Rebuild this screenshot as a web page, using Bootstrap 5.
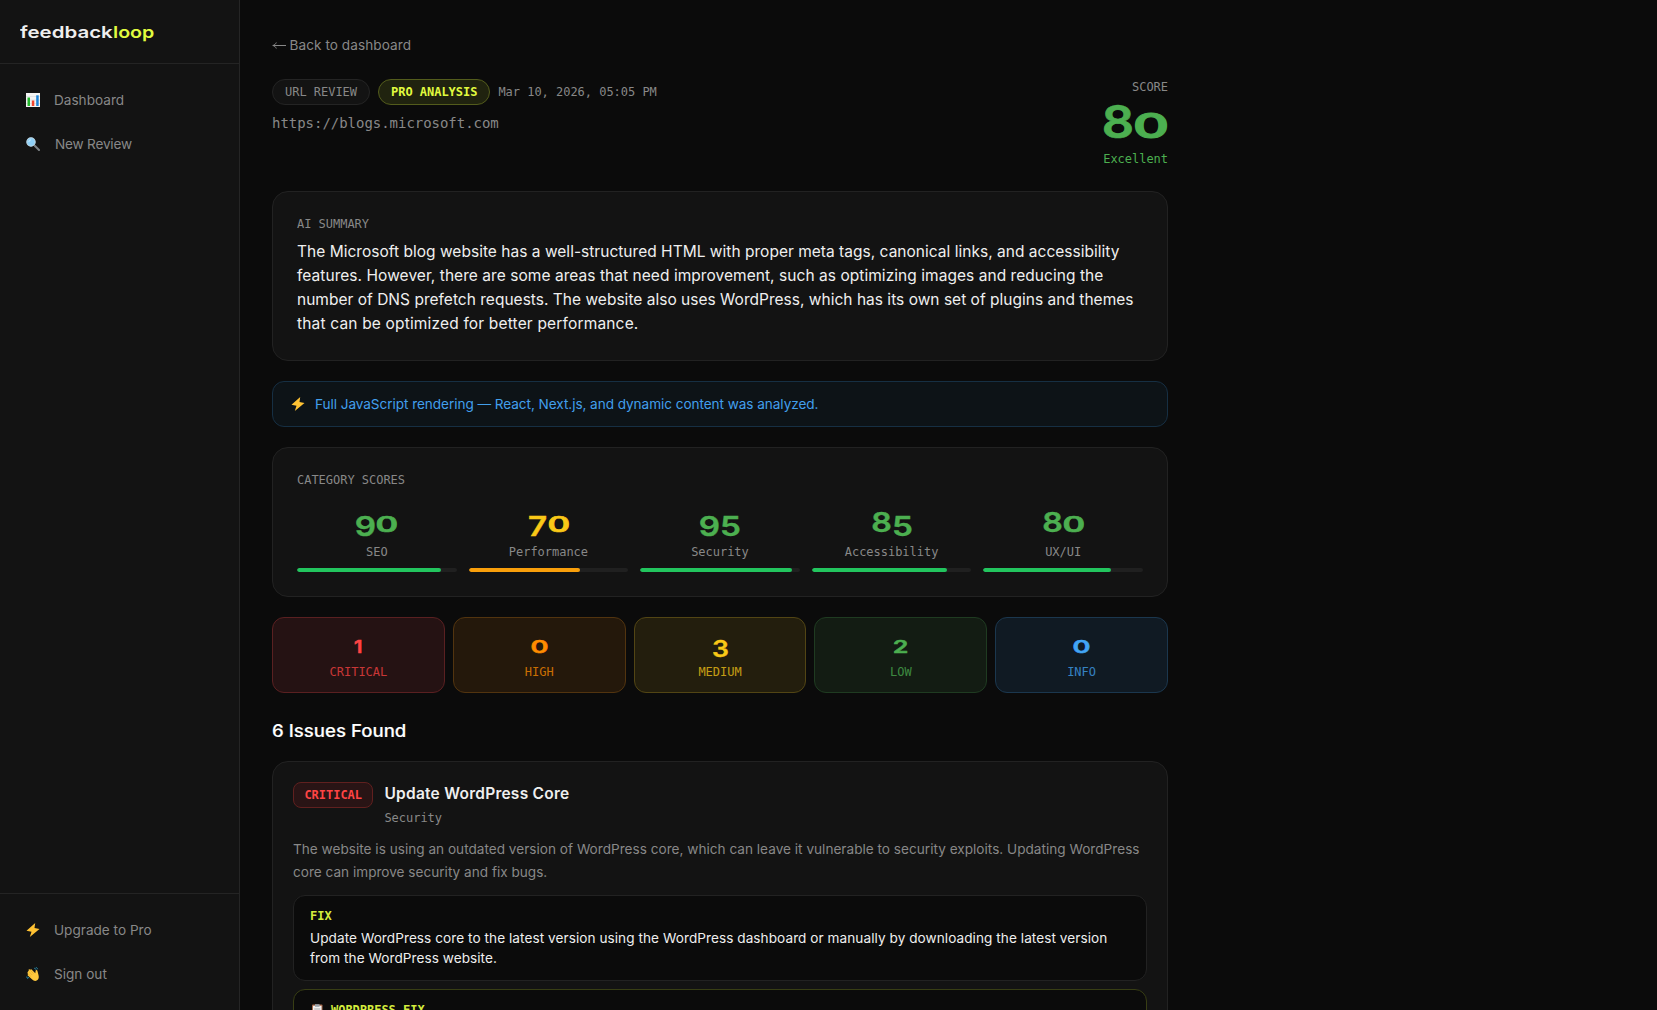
<!DOCTYPE html>
<html lang="en" data-bs-theme="dark">
<head>
<meta charset="utf-8">
<meta name="viewport" content="width=device-width, initial-scale=1">
<title>feedbackloop</title>
<link href="https://cdn.jsdelivr.net/npm/bootstrap@5.3.0/dist/css/bootstrap.min.css" rel="stylesheet">
<style>
:root{--bg:#0b0b0b;--panel:#131313;--line:#222;--muted:#888;--lime:#e1fb3f;--green:#4caf50;--yellow:#f9c817;--red:#ff4444;--orange:#ff8c00;--blue:#42a5f5}
body{background:var(--bg);color:#efefef;font-family:Inter,"Noto Sans",sans-serif;font-size:13.6px;line-height:20px;height:100vh;overflow:hidden}
.mono{font-family:"DejaVu Sans Mono","Liberation Mono",monospace;font-size:12px;line-height:16px;letter-spacing:-.025px}
.muted{color:var(--muted)}
.sidebar{width:240px;background:var(--panel);border-right:1px solid #252525}
.brand{height:64px;padding:1px 20px 0;border-bottom:1px solid #242424;font-size:16.5px;font-weight:600;line-height:63px}
.brand span{display:inline-block;transform-origin:0 50%}
.brand .first{width:92.8px;transform:scaleX(1.24)}
.brand .second{color:var(--lime);transform:scaleX(1.19)}
.side-group{padding:16px 12px}
.side-item{height:40px;padding:0 14px;color:var(--muted);text-decoration:none;gap:14px}
.side-item svg{width:14px;height:14px;flex:none}
.side-foot{border-top:1px solid #242424}
.page-main{width:960px;padding:35px 32px 0;height:100vh;overflow:hidden}
.back{color:var(--muted);text-decoration:none;gap:3.5px;height:20px;letter-spacing:.06px}
.pill{border:1px solid #242424;border-radius:13px;padding:4px 12px;background:#131313}
.pill-pro{border-color:#535c1c;background:#20230f;color:var(--lime);font-weight:700}
.url{font-size:14px;line-height:20px;margin-top:8px;letter-spacing:-.03px}
.panel{background:var(--panel);border:1px solid var(--line);border-radius:16px}
.num{font-weight:600;white-space:nowrap;color:var(--c)}
.num span{display:inline-block;line-height:1;text-align:center}
.d0,.d1,.d2{font-size:.72em;width:.98em;-webkit-text-stroke:.03em}
.d0{transform:scaleX(1.58)}
.d1{transform:scaleX(1.15);width:.6em}
.d2{transform:scaleX(1.45)}
.d8,.d3,.d5,.d7,.d9{font-size:.94em;width:.745em;-webkit-text-stroke:.015em}
.d8{transform:scaleX(1.12)}
.d3,.d5,.d7,.d9{transform:translateY(.16em) scaleX(1.18)}
.num-xl{font-size:48px;line-height:48px;margin:2px 0 6px}
.num-lg{font-size:29px;line-height:36px}
.num-lg .d0{width:1.04em;transform:scaleX(1.64)}
.num-lg .d8,.num-lg .d9,.num-lg .d5,.num-lg .d7{width:.77em}
.num-lg .d8{transform:scaleX(1.18)}
.num-lg .d9,.num-lg .d5,.num-lg .d7{transform:translateY(.16em) scaleX(1.22)}
.num-md{font-size:24px;line-height:32px}
.summary{font-size:15.5px;line-height:24px}
.ln{display:block;white-space:nowrap}
.notice{height:46px;border:1px solid #162f43;border-radius:12px;background:#0d1317;color:#429fec;padding:0 18px;gap:10px}
.notice svg,.fix-icon{width:14px;height:14px;flex:none}
.cat-row{gap:12px}
.track{height:4px;border-radius:2px;background:#202020;margin-top:8px;overflow:hidden}
.track div{height:4px;border-radius:2px;background:#22c55e}
.track .warn{background:#f99f0b}
.sev{border:1px solid;border-radius:12px;height:76px;padding-top:11px}
.sev .mono{margin-top:3px;opacity:.75;color:var(--c)}
.s-red{--c:var(--red);background:#251213;border-color:#5a2021}
.s-orange{--c:var(--orange);background:#24180b;border-color:#52340f}
.s-yellow{--c:var(--yellow);background:#231e0d;border-color:#524514}
.s-green{--c:var(--green);background:#131c13;border-color:#1f3b21}
.s-blue{--c:var(--blue);background:#101a23;border-color:#1b374e}
.issues-title{font-size:17px;font-weight:500;line-height:28px;transform:scaleX(1.095);transform-origin:0 50%;margin:24px 0 16px;-webkit-text-stroke:.15px}
.issue{padding:20px;height:300px}
.tag{border:1px solid #60201f;border-radius:8px;background:#291415;color:var(--red);font-weight:700;padding:4px 10.4px}
.issue-title{font-size:15.5px;font-weight:600;line-height:24px;letter-spacing:.25px}
.desc{line-height:23px;margin:12.5px 0 11px}
.fix{background:#0b0b0b;border:1px solid var(--line);border-radius:12px;padding:12px 16px;height:86px}
.fix .mono{color:#d4ec3d;font-weight:700}
.fix-wp{border-color:#383e14}
.gap-x{gap:8px}
</style>
</head>
<body>
<div class="d-flex vh-100">
  <aside class="sidebar d-flex flex-column flex-shrink-0">
    <div class="brand"><span class="first">feedback</span><span class="second">loop</span></div>
    <nav class="side-group d-flex flex-column gap-1 flex-grow-1">
      <a href="#" class="side-item d-flex align-items-center">
        <svg viewBox="0 0 14 14"><path fill="#f4f4f4" d="M0 0h14v14H0z"/><path stroke="#cfd5da" stroke-width=".5" d="M0 3.5h14M0 7h14M0 10.5h14"/><path fill="#22b62c" d="M1.5 4.5H4V13H1.5z"/><path fill="#f2452e" d="M5.8 7.5h2.5V13H5.8z"/><path fill="#1c83d8" d="M10.2 2.3h2.5V13h-2.5z"/></svg>
        <span>Dashboard</span></a>
      <a href="#" class="side-item d-flex align-items-center">
        <svg viewBox="0 0 14 14"><path stroke="#7d8286" stroke-width="2" stroke-linecap="round" d="m9 9 4 4"/><circle cx="5" cy="5" r="4.2" fill="#8fd0f7" stroke="#c2dcea" stroke-width="1.1"/><path d="M2.8 5A2.4 2.4 0 0 1 5 2.8" fill="none" stroke="#d7f0ff" stroke-width=".8"/></svg>
        <span style="letter-spacing:-.2px;padding-left:1px">New Review</span></a>
    </nav>
    <div class="side-foot side-group d-flex flex-column gap-1">
      <a href="#" class="side-item d-flex align-items-center">
        <svg viewBox="0 0 14 14"><path fill="#ffc233" d="M9.200 0 .5 7.800l5 1L3.800 14 13.500 6 8.500 5.100z"/></svg>
        <span>Upgrade to Pro</span></a>
      <a href="#" class="side-item d-flex align-items-center">
        <svg viewBox="0 0 14 14"><path fill="#ffc83d" d="M2 5.2c-.5-.8.4-1.5 1-.9L2.6 3.2c-.3-.8.7-1.3 1.2-.6l.5.5c-.2-.9.8-1.3 1.3-.6l3.7 3.8.3-2.6c.1-1.1 1.6-1.1 1.8 0l.9 3.6c1 3.5.3 5-1.2 6-1.700 1.1-3.600.5-4.900-.7L1.800 8.500c-.6-.7 0-1.300.700-1.100L1.500 6.300C1 5.600 1.500 5 2 5.200z"/><path fill="none" stroke="#d99a1c" stroke-width=".5" d="m3 4.600 3.300 3.500M4.400 3.300l3.200 3.400M2.500 7.200l2.700 2.500"/><path fill="none" stroke="#2589ab" stroke-width="1" d="M8.200 1.200c1 .1 1.700.7 1.900 1.600M9.800.4c1.100.2 1.700.9 1.800 1.800M.600 9.600c0 1 .6 1.700 1.400 1.900M2 9.800c.1.700.5 1.100 1.100 1.300"/></svg>
        <span>Sign out</span></a>
    </div>
  </aside>

  <main class="page-main flex-shrink-0">
    <a href="#" class="back d-flex align-items-center">
      <svg width="14" height="10" viewBox="0 0 14 10" fill="none" stroke="currentColor"><path d="M.8 5.500H14M4.300 2.500C3.500 4.200 2.300 5.200.8 5.500c1.500.3 2.700 1.300 3.500 3"/></svg><span>Back to dashboard</span></a>

    <header class="d-flex justify-content-between mb-4" style="margin-top:24px">
      <div>
        <div class="d-flex align-items-center gap-x">
          <span class="mono pill muted">URL REVIEW</span>
          <span class="mono pill pill-pro">PRO ANALYSIS</span>
          <span class="mono muted">Mar 10, 2026, 05:05 PM</span>
        </div>
        <div class="mono muted url">https://blogs.microsoft.com</div>
      </div>
      <div class="text-end" style="--c:var(--green)">
        <div class="mono muted">SCORE</div>
        <div class="num num-xl"><span class="d8">8</span><span class="d0">0</span></div>
        <div class="mono" style="color:var(--c)">Excellent</div>
      </div>
    </header>

    <section class="panel p-4" style="height:170px">
      <div class="mono muted mb-2">AI SUMMARY</div>
      <div class="summary">
        <span class="ln" style="letter-spacing:.02px">The Microsoft blog website has a well-structured HTML with proper meta tags, canonical links, and accessibility</span>
        <span class="ln" style="letter-spacing:.05px">features. However, there are some areas that need improvement, such as optimizing images and reducing the</span>
        <span class="ln" style="letter-spacing:.015px">number of DNS prefetch requests. The website also uses WordPress, which has its own set of plugins and themes</span>
        <span class="ln" style="letter-spacing:.17px">that can be optimized for better performance.</span>
      </div>
    </section>

    <div class="notice d-flex align-items-center" style="margin:20px 0">
      <svg viewBox="0 0 14 14"><path fill="#ffc233" d="M9.200 0 .5 7.800l5 1L3.800 14 13.500 6 8.500 5.100z"/></svg>
      <span style="letter-spacing:-.06px">Full JavaScript rendering — React, Next.js, and dynamic content was analyzed.</span>
    </div>

    <section class="panel p-4" style="height:150px">
      <div class="mono muted mb-3">CATEGORY SCORES</div>
      <div class="d-flex cat-row text-center">
        <div class="flex-fill w-100" style="--c:var(--green)"><div class="num num-lg"><span class="d9">9</span><span class="d0">0</span></div><div class="mono muted mt-1">SEO</div><div class="track"><div style="width:90%"></div></div></div>
        <div class="flex-fill w-100" style="--c:var(--yellow)"><div class="num num-lg"><span class="d7">7</span><span class="d0">0</span></div><div class="mono muted mt-1">Performance</div><div class="track"><div class="warn" style="width:70%"></div></div></div>
        <div class="flex-fill w-100" style="--c:var(--green)"><div class="num num-lg"><span class="d9">9</span><span class="d5">5</span></div><div class="mono muted mt-1">Security</div><div class="track"><div style="width:95%"></div></div></div>
        <div class="flex-fill w-100" style="--c:var(--green)"><div class="num num-lg"><span class="d8">8</span><span class="d5">5</span></div><div class="mono muted mt-1">Accessibility</div><div class="track"><div style="width:85%"></div></div></div>
        <div class="flex-fill w-100" style="--c:var(--green)"><div class="num num-lg"><span class="d8">8</span><span class="d0">0</span></div><div class="mono muted mt-1">UX/UI</div><div class="track"><div style="width:80%"></div></div></div>
      </div>
    </section>

    <div class="d-flex gap-x text-center" style="margin-top:20px">
      <div class="sev s-red w-100"><div class="num num-md"><span class="d1">1</span></div><div class="mono">CRITICAL</div></div>
      <div class="sev s-orange w-100"><div class="num num-md"><span class="d0">0</span></div><div class="mono">HIGH</div></div>
      <div class="sev s-yellow w-100"><div class="num num-md"><span class="d3">3</span></div><div class="mono">MEDIUM</div></div>
      <div class="sev s-green w-100"><div class="num num-md"><span class="d2">2</span></div><div class="mono">LOW</div></div>
      <div class="sev s-blue w-100"><div class="num num-md"><span class="d0">0</span></div><div class="mono">INFO</div></div>
    </div>

    <h2 class="issues-title">6 Issues Found</h2>

    <article class="panel issue">
      <div class="d-flex align-items-start" style="gap:11px">
        <span class="mono tag">CRITICAL</span>
        <div>
          <div class="issue-title">Update WordPress Core</div>
          <div class="mono muted" style="margin-top:3.500px">Security</div>
        </div>
      </div>
      <div class="desc muted">
        <span class="ln" style="letter-spacing:.01px">The website is using an outdated version of WordPress core, which can leave it vulnerable to security exploits. Updating WordPress</span>
        <span class="ln">core can improve security and fix bugs.</span>
      </div>
      <div class="fix mb-2">
        <div class="mono" style="margin-bottom:4px">FIX</div>
        <span class="ln" style="letter-spacing:.06px">Update WordPress core to the latest version using the WordPress dashboard or manually by downloading the latest version</span>
        <span class="ln" style="letter-spacing:.05px">from the WordPress website.</span>
      </div>
      <div class="fix fix-wp">
        <div class="mono d-flex align-items-center">
          <svg class="fix-icon" viewBox="0 0 14 14" style="margin-right:7px"><rect x="2" y="1.500" width="10.500" height="12" rx="1" fill="#a5694a"/><path fill="#f1f1f1" d="M3 2.800h8.500V13H3z"/><path fill="#9aa3ab" d="M5 1.200h4.500v2.600H5z"/><path stroke="#9a9a9a" stroke-width=".8" d="M4.200 6h6M4.200 8h6M4.200 10h4"/></svg>
          <span>WORDPRESS FIX</span>
        </div>
      </div>
    </article>
  </main>
</div>
<script src="https://cdn.jsdelivr.net/npm/bootstrap@5.3.0/dist/js/bootstrap.bundle.min.js"></script>
</body>
</html>
